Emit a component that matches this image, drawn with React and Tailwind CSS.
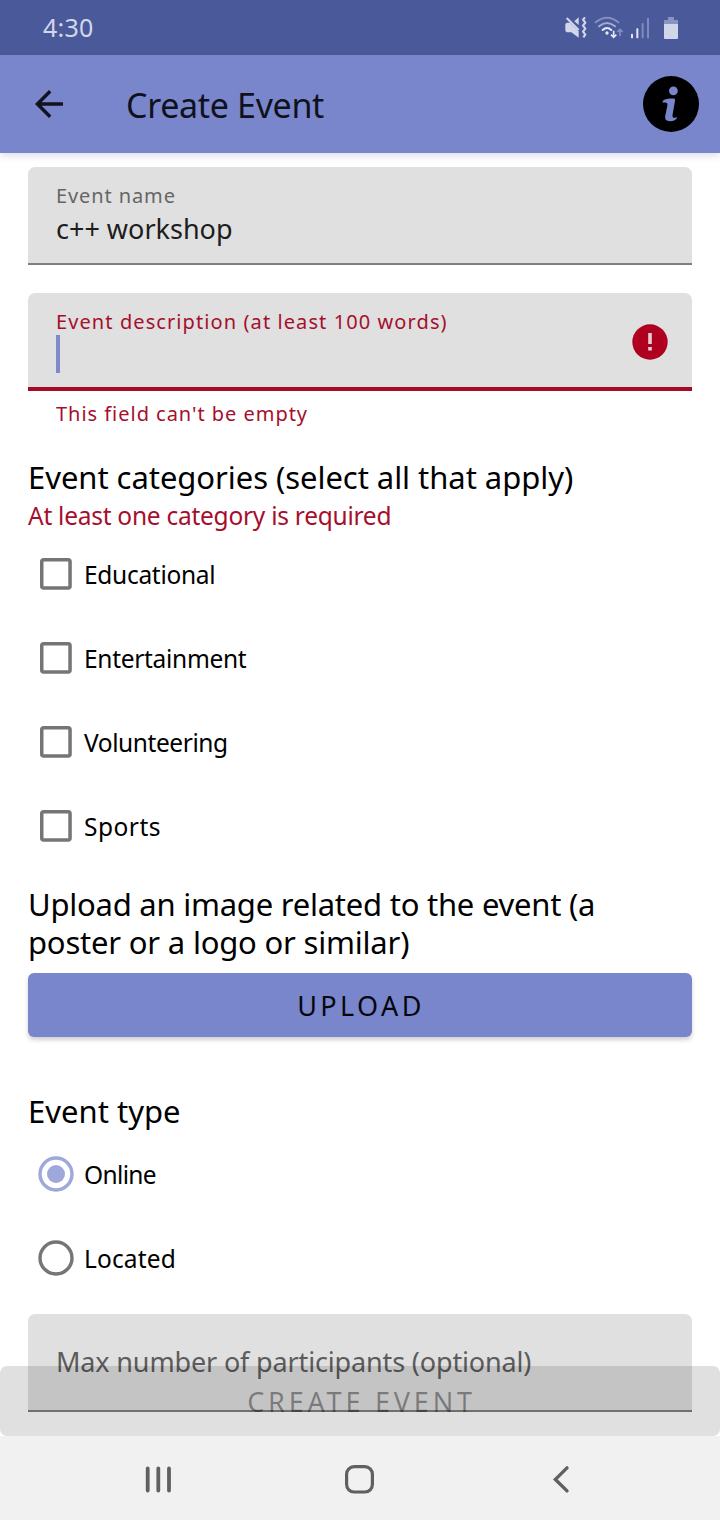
import React from "react";

function StatusIcons() {
  return (
    <svg viewBox="60 36 372 96" className="h-8 w-[124px] shrink-0" fill="none">
      {/* muted speaker with vibration */}
      <path d="M76 72 80 68H90L116 94V113L94 97H80L76 93Z" fill="#d2d6ea" />
      <path d="M80 54 116 90" stroke="#d2d6ea" strokeWidth="6" />
      <path d="M103 64 116 52V75Z" fill="#d2d6ea" />
      <path d="M135 52 129 59 136 68 129 77 136 86 129 95 136 104 130 112" stroke="#d2d6ea" strokeWidth="6.5" strokeLinejoin="round" />
      {/* wifi */}
      <path d="M167 67Q201 39 235 67" stroke="#8490bf" strokeWidth="6" strokeLinecap="round" />
      <path d="M177 79Q201 59 225 79" stroke="#a3acd2" strokeWidth="6" strokeLinecap="round" />
      <path d="M188 90Q201 78 214 90" stroke="#e4e7f5" strokeWidth="6" strokeLinecap="round" />
      <circle cx="201" cy="99" r="5" fill="#e4e7f5" />
      <path d="M221 92V111M213 104 221 112 229 104" stroke="#e4e7f5" strokeWidth="5" />
      <path d="M240 108V89M232 96 240 88 248 96" stroke="#8490bf" strokeWidth="5" />
      {/* signal */}
      <rect x="273" y="101" width="6" height="14" rx="2" fill="#e4e7f5" />
      <rect x="289" y="85" width="6" height="30" rx="2" fill="#e4e7f5" />
      <rect x="305" y="69" width="6" height="46" rx="2" fill="#7f8bbc" />
      <rect x="321" y="53" width="6" height="62" rx="2" fill="#7f8bbc" />
      {/* battery */}
      <path d="M372 72V62Q372 60 374 60H384V53Q384 51 386 51H400Q402 51 402 53V60H412Q414 60 414 62V72Z" fill="#8a94c3" />
      <path d="M372 72H414V114Q414 117 411 117H375Q372 117 372 114Z" fill="#d2d6ea" />
    </svg>
  );
}

function CheckRow({ label, textClass }) {
  return (
    <label className="flex h-21 items-center pl-3">
      <svg viewBox="0 0 32 32" className="size-8 shrink-0" fill="none" stroke="#757575" strokeWidth="3.5">
        <rect x="1.75" y="1.75" width="28.3" height="28.3" rx="2" />
      </svg>
      <span className={`ml-3 pt-[2px] text-[24.5px] leading-[30px] ${textClass}`}>{label}</span>
    </label>
  );
}

function RadioRow({ label, checked, textClass }) {
  const color = checked ? "#9fa8da" : "#757575";
  return (
    <label className="flex h-21 items-center pl-[10px]">
      <svg viewBox="0 0 36 36" className="size-9 shrink-0">
        <circle cx="18" cy="18" r="16" fill="none" stroke={color} strokeWidth="3.4" />
        {checked && <circle cx="18" cy="18" r="9" fill={color} />}
      </svg>
      <span className={`ml-[10px] pt-[2px] text-[24.5px] leading-[30px] ${textClass}`}>{label}</span>
    </label>
  );
}

export default function App() {
  return (
    <div className="relative flex h-[1520px] w-[720px] flex-col overflow-hidden bg-white font-['Noto_Sans',sans-serif] whitespace-nowrap text-black">
      <div className="flex h-[55px] shrink-0 items-center justify-between bg-[#4a5999] pr-9 pl-[43px]">
        <span className="pb-px text-[25px] leading-8 tracking-[0.2px] text-[#d2d6ea]">4:30</span>
        <StatusIcons />
      </div>

      <header className="flex h-[98px] shrink-0 items-center bg-[#7986cb] pr-[21px] pl-[34px] shadow-[0_2px_8px_rgba(60,60,140,0.2)]">
        <svg viewBox="0 0 32 32" className="size-8 shrink-0" fill="none" stroke="#12131f" strokeWidth="3.4">
          <path d="M29 16H4M16.2 3.2 3.4 16 16.2 28.8" />
        </svg>
        <h1 className="ml-[60px] flex-1 pt-[2px] text-[34px] leading-[44px] tracking-[-0.33px] text-[#10111d]">Create Event</h1>
        <svg viewBox="0 0 56 56" className="size-14 shrink-0">
          <circle cx="28" cy="28" r="28" fill="#000" />
          <circle cx="30.4" cy="14.8" r="4.4" fill="#7986cb" />
          <path d="M19.6 25C21.5 23.2 25 22.6 30.6 22.6Q32.4 22.6 32.1 24.6L29.6 38.4C29.2 41 30 42 31.6 41.8L34.2 41.2C33.4 43.8 30.6 45.2 27 45.2C23 45.2 21.6 43.2 22.3 39.6L24.4 29.4C24.8 27.2 23.8 26.4 22 26.4H19.8Z" fill="#7986cb" />
        </svg>
      </header>

      <main className="flex min-h-0 flex-1 flex-col px-7 pt-[14px]">
        <div className="h-[98px] shrink-0 rounded-t-[7px] border-b-2 border-[#7f7f7f] bg-[#e0e0e0] px-7 pt-[17px]">
          <div className="text-[20px] leading-6 tracking-[0.9px] text-[#666]">Event name</div>
          <div className="mt-[3px] text-[27px] leading-9 text-[#1d1d1d]">c++ workshop</div>
        </div>

        <div className="mt-7 flex h-[98px] shrink-0 items-center justify-between rounded-t-[7px] border-b-4 border-[#a50a28] bg-[#e0e0e0] pr-[24px] pl-7">
          <div className="self-start pt-[17px]">
            <div className="text-[20px] leading-6 tracking-[1.09px] text-[#a50f2d]">Event description (at least 100 words)</div>
            <div className="mt-px h-[38px] w-1 bg-[#7f89cc]" />
          </div>
          <svg viewBox="0 0 36 36" className="mt-1 size-9 shrink-0">
            <circle cx="18" cy="18" r="17.7" fill="#b00020" />
            <path d="M16.2 9H19.8V20H16.2ZM16.2 23H19.8V26.6H16.2Z" fill="#e6cfd3" />
          </svg>
        </div>
        <div className="mt-[11px] ml-7 text-[20px] leading-6 tracking-[0.97px] text-[#a50f2d]">This field can't be empty</div>

        <h2 className="mt-8 text-[31px] leading-[38px] tracking-[-0.05px]">Event categories (select all that apply)</h2>
        <p className="mt-[5px] text-[24.5px] leading-[30px] tracking-[-0.26px] text-[#a50f2d]">At least one category is required</p>
        <div className="mt-px flex flex-col">
          <CheckRow label="Educational" textClass="tracking-[-0.3px]" />
          <CheckRow label="Entertainment" textClass="tracking-[-0.3px]" />
          <CheckRow label="Volunteering" textClass="tracking-[-0.42px]" />
          <CheckRow label="Sports" textClass="tracking-[0.5px]" />
        </div>

        <h2 className="mt-[17px] text-[31px] leading-[38px]">
          <span className="block tracking-[-0.24px]">Upload an image related to the event (a</span>
          <span className="block tracking-[-0.2px]">poster or a logo or similar)</span>
        </h2>
        <button className="mt-3 flex h-16 shrink-0 items-center justify-center rounded-[6px] bg-[#7986cb] pt-[2px] pl-[2px] text-[27px] leading-9 tracking-[3.4px] text-[#06060f] shadow-[0_3px_4px_rgba(0,0,0,0.18)]">
          UPLOAD
        </button>

        <h2 className="mt-[55px] text-[31px] leading-[38px] tracking-[0.02px]">Event type</h2>
        <div className="mt-[2px] flex flex-col">
          <RadioRow label="Online" checked textClass="tracking-[-0.65px]" />
          <RadioRow label="Located" textClass="tracking-[0.15px]" />
        </div>

        <div className="mt-[14px] h-[98px] shrink-0 rounded-t-[7px] border-b-2 border-[#7f7f7f] bg-[#e0e0e0] px-7 pt-[30px]">
          <div className="text-[27px] leading-9 tracking-[-0.15px] text-[#5c5c5c]">Max number of participants (optional)</div>
        </div>
      </main>

      <nav className="flex h-21 shrink-0 items-center bg-[#f1f1f1] px-[57px] pt-[2px]">
        <div className="flex flex-1 justify-center">
          <svg viewBox="0 0 32 32" className="size-8" stroke="#606060" strokeWidth="3.8" strokeLinecap="round">
            <path d="M5.7 5.4V27.6M16.3 5.4V27.6M27 5.4V27.6" />
          </svg>
        </div>
        <div className="flex flex-1 justify-center">
          <svg viewBox="0 0 32 32" className="size-8" fill="none" stroke="#606060" strokeWidth="3.2">
            <rect x="2.6" y="3.6" width="25.8" height="25.4" rx="7.5" />
          </svg>
        </div>
        <div className="flex flex-1 justify-center">
          <svg viewBox="0 0 32 32" className="size-8" fill="none" stroke="#606060" strokeWidth="3.4" strokeLinecap="round">
            <path d="M21 4.9 9.4 16.4 21 27.9" />
          </svg>
        </div>
      </nav>

      {/* disabled submit button floating above the scrolled form */}
      <button className="absolute inset-x-0 bottom-21 flex h-[70px] items-center justify-center rounded-[7px] bg-black/12 pt-[2px] pl-[3px] text-[27px] leading-9 tracking-[3.8px] text-black/38">
        CREATE EVENT
      </button>
    </div>
  );
}
